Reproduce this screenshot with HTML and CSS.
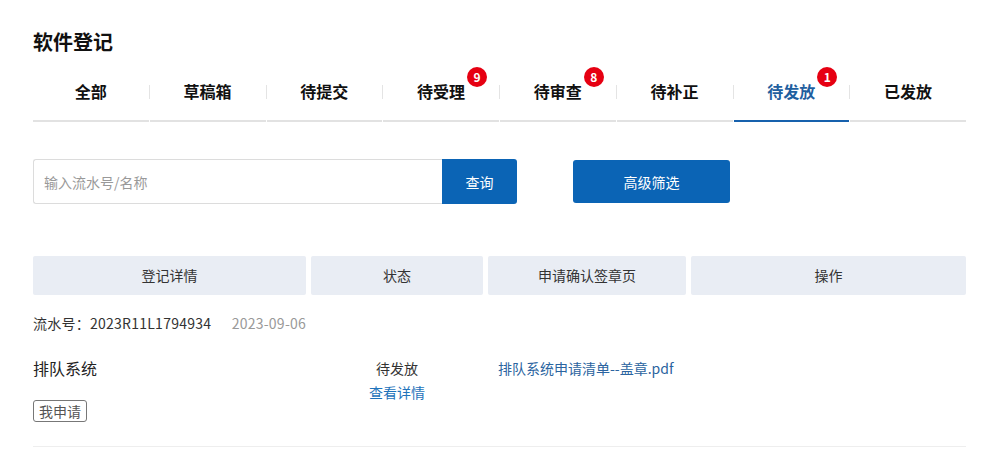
FILE: index.html
```html
<!DOCTYPE html>
<html lang="zh-CN">

<head>
  <meta charset="UTF-8">
  <meta name="viewport" content="width=device-width, initial-scale=1.0">
  <title>软件登记</title>
  <link rel="stylesheet" href="styles.css">
</head>

<body>
  <div class="container">
    <h2 class="page-title">软件登记</h2>

    <div class="tabs">
      <div class="tab"><span class="tab-label">全部</span></div>
      <div class="tab"><span class="tab-label">草稿箱</span></div>
      <div class="tab"><span class="tab-label">待提交</span></div>
      <div class="tab"><span class="tab-label">待受理<i class="badge">9</i></span></div>
      <div class="tab"><span class="tab-label">待审查<i class="badge">8</i></span></div>
      <div class="tab"><span class="tab-label">待补正</span></div>
      <div class="tab active"><span class="tab-label">待发放<i class="badge">1</i></span></div>
      <div class="tab"><span class="tab-label">已发放</span></div>
    </div>

    <div class="search-bar">
      <div class="search-box">
        <input type="text" class="search-input" placeholder="输入流水号/名称">
        <button class="btn btn-search">查询</button>
      </div>
      <button class="btn btn-filter">高级筛选</button>
    </div>

    <div class="table-head">
      <div>登记详情</div>
      <div>状态</div>
      <div>申请确认签章页</div>
      <div>操作</div>
    </div>

    <div class="record">
      <div class="record-meta">
        <span class="serial">流水号：2023R11L1794934</span>
        <span class="date">2023-09-06</span>
      </div>
      <div class="record-row">
        <div class="record-name">
          <div class="name">排队系统</div>
          <span class="tag">我申请</span>
        </div>
        <div class="record-status">
          <div>待发放</div>
          <a class="link-detail" href="#">查看详情</a>
        </div>
        <div class="record-file">
          <a class="link-file" href="#">排队系统申请清单--盖章.pdf</a>
        </div>
        <div></div>
      </div>
    </div>
  </div>
</body>

</html>
```

FILE: styles.css
```css
body {
  margin: 0;
  padding: 0;
  background: #fff;
  font-family: "Microsoft YaHei", "Noto Sans CJK SC", "Noto Sans", sans-serif;
  color: #333;
}

.container {
  width: 933px;
  padding: 0 33px;
}

.page-title {
  margin: 28px 0 0;
  font-size: 20px;
  line-height: 28px;
  font-weight: bold;
  color: #111;
}

/* tabs */
.tabs {
  display: flex;
  margin-top: 6px;
}

.tab {
  position: relative;
  flex: 1;
  height: 58px;
  display: flex;
  align-items: center;
  justify-content: center;
  border-bottom: 2px solid #e2e2e2;
  margin-right: 1px;
}

.tab:last-child {
  margin-right: 0;
}

.tab::after {
  content: "";
  position: absolute;
  right: -1px;
  top: 23px;
  height: 14px;
  width: 1px;
  background: #e4e4e4;
}

.tab:last-child::after {
  display: none;
}

.tab-label {
  position: relative;
  font-size: 16px;
  font-weight: bold;
  color: #111;
}

.tab.active {
  border-bottom-color: #1761ad;
}

.tab.active .tab-label {
  color: #1f5f9f;
}

.badge {
  position: absolute;
  left: 100%;
  top: -12px;
  margin-left: 2px;
  width: 20px;
  height: 20px;
  border-radius: 50%;
  background: #e60012;
  color: #fff;
  font-size: 12px;
  font-style: normal;
  font-weight: bold;
  line-height: 20px;
  text-align: center;
}

/* search */
.search-bar {
  display: flex;
  align-items: center;
  margin-top: 37px;
}

.search-box {
  display: flex;
  width: 484px;
  height: 45px;
}

.search-input {
  flex: 1;
  box-sizing: border-box;
  height: 45px;
  padding: 0 10px;
  border: 1px solid #dcdcdc;
  border-right: none;
  border-radius: 3px 0 0 3px;
  font-family: inherit;
  font-size: 14px;
  color: #333;
  outline: none;
}

.search-input::placeholder {
  color: #999;
}

.btn {
  border: none;
  background: #0b64b5;
  color: #fff;
  font-family: inherit;
  font-size: 14px;
  cursor: pointer;
}

.btn-search {
  width: 75px;
  height: 45px;
  border-radius: 0 3px 3px 0;
}

.btn-filter {
  width: 157px;
  height: 43px;
  margin-left: 56px;
  border-radius: 3px;
}

/* table */
.table-head,
.record-row {
  display: grid;
  grid-template-columns: 273px 172px 198px 275px;
  column-gap: 5px;
}

.table-head {
  margin-top: 52px;
}

.table-head div {
  height: 39px;
  line-height: 39px;
  background: #e9edf4;
  text-align: center;
  font-size: 14px;
  color: #333;
  border-radius: 2px;
}

.record {
  border-bottom: 1px solid #eee;
  padding-bottom: 24px;
}

.record-meta {
  margin-top: 18px;
  font-size: 14px;
  line-height: 20px;
  letter-spacing: 0.25px;
}

.serial {
  color: #333;
}

.date {
  margin-left: 17px;
  color: #999;
}

.record-row {
  margin-top: 23px;
}

.name {
  font-size: 16px;
  line-height: 24px;
  color: #222;
}

.tag {
  display: inline-block;
  margin-top: 20px;
  padding: 0 5px;
  height: 20px;
  line-height: 20px;
  border: 1px solid #777;
  border-radius: 3px;
  font-size: 14px;
  color: #555;
}

.record-status {
  text-align: center;
  font-size: 14px;
  line-height: 24px;
  color: #333;
}

.link-detail {
  color: #1e73bb;
  text-decoration: none;
}

.record-file {
  padding-left: 10px;
  font-size: 14px;
  line-height: 24px;
}

.link-file {
  color: #2b64a0;
  text-decoration: none;
}
```
